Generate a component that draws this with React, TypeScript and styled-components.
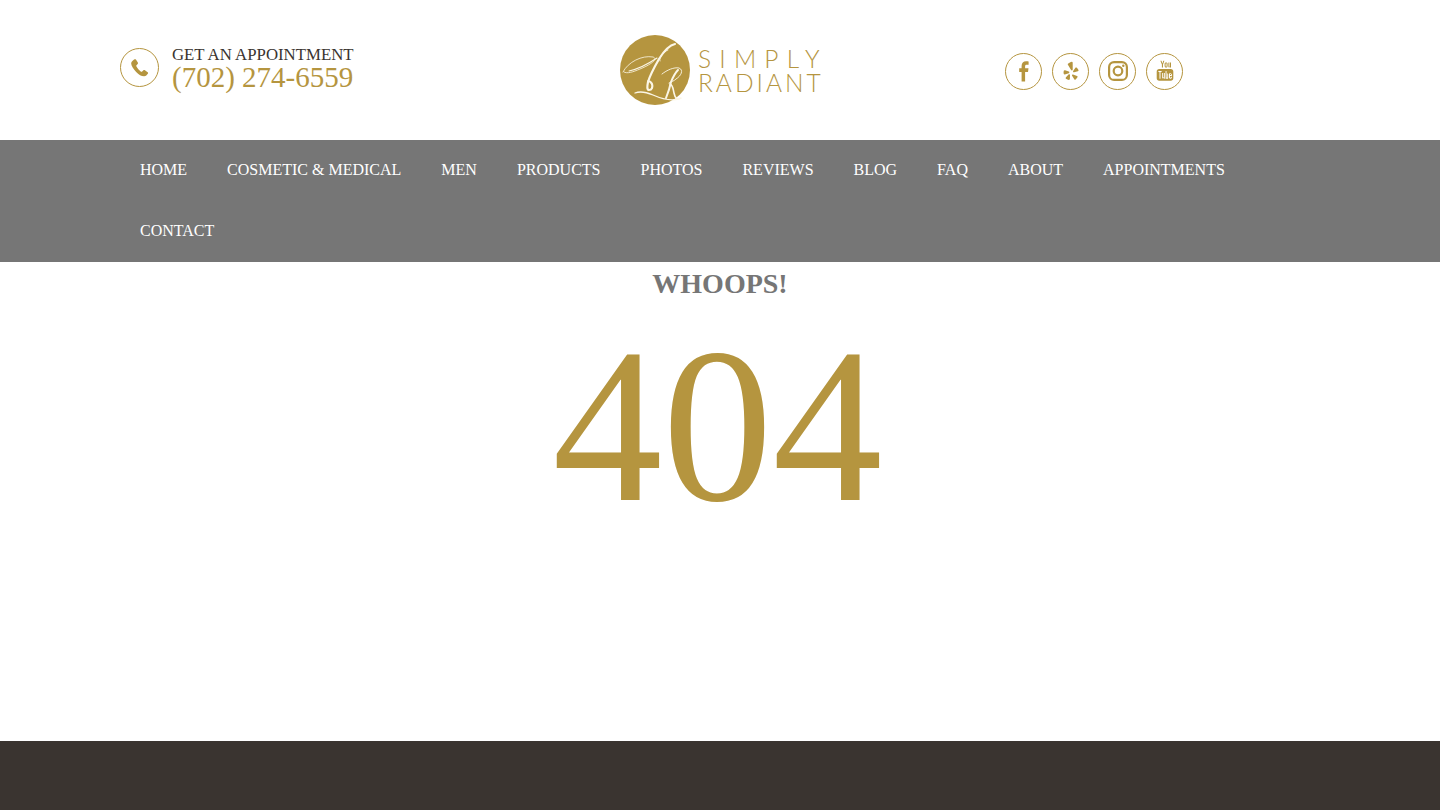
import React from "react";
import styled, { createGlobalStyle } from "styled-components";

const GlobalStyle = createGlobalStyle`
  html, body {
    margin: 0;
    padding: 0;
    background: #fff;
    font-family: "Liberation Serif", "Times New Roman", serif;
  }
  * { box-sizing: border-box; }
`;

const GOLD = "#b5953f";

const NAV_ITEMS = [
  "HOME",
  "COSMETIC & MEDICAL",
  "MEN",
  "PRODUCTS",
  "PHOTOS",
  "REVIEWS",
  "BLOG",
  "FAQ",
  "ABOUT",
  "APPOINTMENTS",
  "CONTACT",
];

const PhoneIcon = () => (
  <svg width="20" height="20" viewBox="0 0 24 24" fill={GOLD}>
    <path d="M6.6 1.6c.6-.4 1.300-.3 1.700.3l2.300 3.500c.4.6.3 1.300-.2 1.800L9 8.600c-.4.4-.5.900-.2 1.400.6 1.200 1.500 2.500 2.400 3.600 1 1.100 2.100 2.100 3.200 2.800.5.3 1 .2 1.400-.2l1.500-1.500c.5-.5 1.200-.5 1.800-.1l3.300 2.500c.6.4.7 1.200.2 1.800-1 1.300-2.400 3-4.300 3.100-3 .2-6.700-2.200-9.700-5.300C5.500 13.500 2.500 9.300 2.600 6.200c.1-1.900 2.600-3.600 4-4.600z" />
  </svg>
);

const FacebookIcon = () => (
  <svg width="24" height="24" viewBox="0 0 24 24" fill={GOLD}>
    <path d="M9.600 22.500v-9.600H7.200V9.300h2.400V6.900c0-3 1.700-4.700 4.500-4.700 1 0 2 .1 2.500.2v3.300h-1.800c-1.400 0-1.700.7-1.700 1.600v2h3.400l-.5 3.600h-2.900v9.600z" />
  </svg>
);

const YelpIcon = () => (
  <svg width="24" height="24" viewBox="0 0 24 24" fill={GOLD}>
    <path d="M12.800 2.800c.6 0 .9.400.9.900v6.900c0 1-1.100 1.200-1.600.5L8.900 5.700c-.3-.5-.1-1 .4-1.200.9-.6 2.300-1.500 3.500-1.700z" />
    <path d="M9.800 12.600c.8.300.8 1.400 0 1.700l-4 1.200c-.5.100-1-.2-1.100-.7-.2-.9-.2-2.100.1-3 .2-.5.700-.7 1.200-.5z" />
    <path d="M11 16.100c.1-.8-.9-1.200-1.500-.6l-2.700 3c-.3.400-.2.900.2 1.200.8.600 2 1.100 2.900 1.200.5.100.9-.3 1-.8z" />
    <path d="M14 15.500c-.7-.2-1.300.6-.9 1.300l2.300 3.600c.3.400.8.500 1.200.2.800-.6 1.600-1.600 2-2.500.2-.5-.1-1-.6-1.100z" />
    <path d="M14.200 11.900c-.5.700.1 1.500.9 1.300l3.800-1c.5-.1.800-.6.600-1.100-.4-.9-1.100-1.900-1.900-2.500-.4-.3-.9-.2-1.200.2z" />
  </svg>
);

const InstagramIcon = () => (
  <svg width="24" height="24" viewBox="0 0 24 24" fill="none" stroke={GOLD}>
    <rect x="3.100" y="3.100" width="17.800" height="17.800" rx="5" strokeWidth="2.200" />
    <circle cx="12" cy="12" r="4.300" strokeWidth="2.200" />
    <circle cx="17.300" cy="6.700" r="1.200" fill={GOLD} stroke="none" />
  </svg>
);

const YoutubeIcon = () => (
  <svg width="24" height="24" viewBox="0 0 24 24" fill={GOLD}>
    <path d="M7.400 1.800h1.100l.9 2.800.9-2.800h1.100L10 5.600v2.900H8.900V5.600z" />
    <path d="M13.100 3.400c-1 0-1.500.6-1.500 1.400v2.300c0 .9.500 1.500 1.500 1.500s1.500-.6 1.500-1.500V4.800c0-.8-.5-1.400-1.500-1.400zm0 .9c.3 0 .5.200.5.500v2.400c0 .3-.2.500-.5.500s-.5-.2-.5-.5V4.800c0-.3.200-.5.500-.5z" />
    <path d="M15.400 3.500h1v3.900c0 .3.300.3.600 0V3.500h1v5h-1V8c-.7.700-1.600.7-1.600-.3z" />
    <path fillRule="evenodd" d="M6.200 10h11.600c1.500 0 2.500 1 2.500 2.500v6.700c0 1.500-1 2.500-2.500 2.500H6.200c-1.500 0-2.500-1-2.500-2.500v-6.700c0-1.500 1-2.500 2.500-2.500zM5.400 12v1h1.100v6.800h1V13h1.100v-1zm3.800 2v4.800c0 1 .9 1 1.700.3v.7h.9V14h-.9v4.200c-.3.300-.8.300-.8 0V14zm3.400-2v7.800h.9v-.4c.7.800 1.700.5 1.700-.5v-3.500c0-1-1-1.300-1.700-.5V12zm1 3c.2-.2.700-.2.700.2v3.200c0 .4-.5.400-.7.200zm3.900-1.100c-.9 0-1.500.6-1.500 1.400v2.900c0 .9.600 1.500 1.500 1.500s1.400-.6 1.400-1.500v-.5h-.9v.6c0 .3-.2.500-.5.500s-.5-.2-.5-.5v-1.300h1.900v-1.200c0-.8-.5-1.400-1.400-1.400zm-.5 2V15.200c0-.3.200-.5.500-.5s.5.200.5.500v.7z" />
  </svg>
);

// swash monogram, traced loosely by eye
const LogoMark = () => (
  <svg width="70" height="70" viewBox="0 0 70 70">
    <circle cx="35" cy="35" r="35" fill={GOLD} />
    <g fill="none" stroke="#fbf6e6" strokeLinecap="round">
      <path d="M3 37C8 27 22 20 33 22c6 2-3 8-13 12-7 3-13 5-16 3" strokeWidth="0.800" />
      <path d="M9 36c9-2 19-7 28-13" strokeWidth="1.100" />
      <path d="M55 9c-5 1-11 7-16 15-4 7-9 16-11 23-1 5-1 8 1 8 3 0 4-3 3-6-1-2-2-3-4-3" strokeWidth="2.200" />
      <path d="M40 26c-1-4 3-9 8-11" strokeWidth="0.800" />
      <path d="M15 58c5-2 11-1 18 2 9 4 18 6 26 4" strokeWidth="1.300" />
      <path d="M42 39c5-4 12-7 17-6 5 2 2 8-3 11-2 2-5 3-7 4" strokeWidth="0.900" />
      <path d="M58 35c-3 3-5 7-7 12-1 5-3 11-5 16" strokeWidth="2" />
      <path d="M50 49c3 1 3 5 4 9 1 5 3 7 7 5" strokeWidth="1.600" />
    </g>
  </svg>
);

const SOCIALS = [
  { name: "facebook", Icon: FacebookIcon },
  { name: "yelp", Icon: YelpIcon },
  { name: "instagram", Icon: InstagramIcon },
  { name: "youtube", Icon: YoutubeIcon },
];

export default function App() {
  return (
    <Page>
      <GlobalStyle />
      <Header>
        <Contact>
          <PhoneCircle>
            <PhoneIcon />
          </PhoneCircle>
          <ContactText>
            <ContactLabel>GET AN APPOINTMENT</ContactLabel>
            <ContactPhone>(702) 274-6559</ContactPhone>
          </ContactText>
        </Contact>
        <Logo>
          <LogoMark />
          <LogoWords>
            <LogoWord $spacing={8.2}>SIMPLY</LogoWord>
            <LogoWord $spacing={3}>RADIANT</LogoWord>
          </LogoWords>
        </Logo>
        <Socials>
          {SOCIALS.map(({ name, Icon }) => (
            <SocialLink key={name} aria-label={name}>
              <Icon />
            </SocialLink>
          ))}
        </Socials>
      </Header>
      <Nav>
        <NavList>
          {NAV_ITEMS.map((item) => (
            <NavItem key={item}>{item}</NavItem>
          ))}
        </NavList>
      </Nav>
      <Main>
        <Whoops>WHOOPS!</Whoops>
        <Code>404</Code>
      </Main>
      <Footer />
    </Page>
  );
}

const Page = styled.div`
  display: flex;
  flex-direction: column;
  height: 810px;
  overflow: hidden;
`;

const Header = styled.header`
  display: grid;
  grid-template-columns: repeat(3, 400px);
  align-items: center;
  height: 140px;
  padding: 0 120px;
`;

const Contact = styled.div`
  display: flex;
  align-items: center;
  gap: 13px;
  margin-top: -5px;
`;

const PhoneCircle = styled.div`
  display: flex;
  align-items: center;
  justify-content: center;
  width: 39px;
  height: 39px;
  padding-right: 2px;
  border: 1px solid ${GOLD};
  border-radius: 50%;
`;

const ContactText = styled.div`
  display: flex;
  flex-direction: column;
`;

const ContactLabel = styled.span`
  font-size: 16.800px;
  line-height: 18px;
  color: #3a3430;
`;

const ContactPhone = styled.span`
  font-size: 29px;
  line-height: 26px;
  color: ${GOLD};
`;

const Logo = styled.div`
  display: flex;
  align-items: center;
  justify-content: center;
  gap: 8px;
`;

const LogoWords = styled.div`
  display: flex;
  flex-direction: column;
  width: 122px;
  padding-top: 2px;
`;

const LogoWord = styled.span<{ $spacing: number }>`
  font-family: Lato, "Open Sans", sans-serif;
  font-weight: 300;
  font-size: 24.500px;
  line-height: 24.500px;
  letter-spacing: ${(p) => p.$spacing}px;
  color: ${GOLD};
  white-space: nowrap;
`;

const Socials = styled.div`
  display: flex;
  align-items: center;
  gap: 10px;
  padding-left: 85px;
  margin-top: 2px;
`;

const SocialLink = styled.a`
  display: flex;
  align-items: center;
  justify-content: center;
  width: 37px;
  height: 37px;
  border: 1px solid ${GOLD};
  border-radius: 50%;
`;

const Nav = styled.nav`
  background: #767676;
  padding: 0 120px;
`;

const NavList = styled.div`
  display: flex;
  flex-wrap: wrap;
`;

const NavItem = styled.a`
  padding: 0 20px 2px;
  font-size: 16px;
  line-height: 59px;
  color: #fff;
  white-space: nowrap;
`;

const Main = styled.main`
  flex: 1;
  display: flex;
  flex-direction: column;
  align-items: center;
`;

const Whoops = styled.h2`
  margin: 4px 0 0;
  font-size: 28px;
  line-height: 36px;
  font-weight: 700;
  color: #767676;
`;

const Code = styled.div`
  margin-right: 5px;
  font-size: 220px;
  line-height: 248px;
  color: ${GOLD};
`;

const Footer = styled.footer`
  height: 69px;
  background: #3a3430;
`;
